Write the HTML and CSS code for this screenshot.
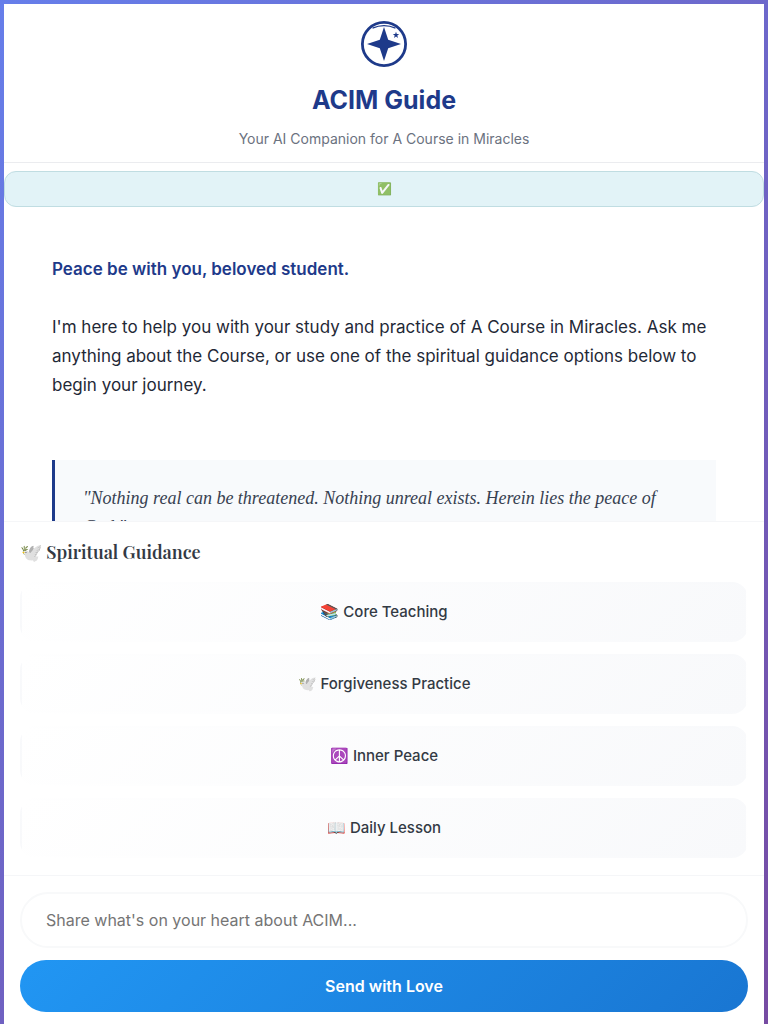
FILE: index.html
```
<!DOCTYPE html>
<html lang="en">
<head>
<meta charset="utf-8">
<meta name="viewport" content="width=device-width, initial-scale=1">
<title>ACIM Guide</title>
<link rel="stylesheet" href="styles.css">
</head>
<body>
<div class="app">
  <header class="header">
    <svg class="logo" viewBox="0 0 48 48" aria-hidden="true">
      <circle cx="24" cy="24" r="21.6" fill="none" stroke="#1e3a8a" stroke-width="2.8"/>
      <path d="M12.500 8.200Q24 3.200 35.500 8.200" fill="none" stroke="#1e3a8a" stroke-width="1.300"/>
      <path d="M24 7L28.200 19.800L41 24L28.200 28.200L24 41L19.800 28.200L7 24L19.800 19.800Z" fill="#1e3a8a"/>
      <path d="M36 11.800l.8 2.200 2.400.1-1.900 1.500.7 2.300-2-1.300-2 1.300.7-2.300-1.900-1.500 2.400-.1z" fill="#1e3a8a"/>
    </svg>
    <h1 class="title">ACIM Guide</h1>
    <p class="subtitle">Your AI Companion for A Course in Miracles</p>
  </header>
  <div class="status" role="status"><span class="status-icon">✅</span></div>
  <main class="messages">
    <p class="greeting">Peace be with you, beloved student.</p>
    <p class="intro">I'm here to help you with your study and practice of A Course in Miracles. Ask me anything about the Course, or use one of the spiritual guidance options below to begin your journey.</p>
    <blockquote class="quote">"Nothing real can be threatened. Nothing unreal exists. Herein lies the peace of God."</blockquote>
  </main>
  <section class="guidance">
    <h2 class="guidance-title">🕊️ Spiritual Guidance</h2>
    <div class="actions">
      <button class="action" type="button">📚 Core Teaching</button>
      <button class="action" type="button">🕊️ Forgiveness Practice</button>
      <button class="action" type="button">☮️ Inner Peace</button>
      <button class="action" type="button">📖 Daily Lesson</button>
    </div>
  </section>
  <form class="composer">
    <input class="message-input" type="text" aria-label="Message" placeholder="Share what's on your heart about ACIM...">
    <button class="send" type="button">Send with Love</button>
  </form>
</div>
</body>
</html>
```
FILE: styles.css
```
* { box-sizing: border-box; margin: 0; }

body {
  height: 100vh;
  padding: 4px 4px 0;
  background: linear-gradient(135deg, #667eea 0%, #764ba2 100%);
  font-family: Inter, "Noto Sans", sans-serif;
  color: #1f2937;
}

.app {
  display: flex;
  flex-direction: column;
  height: 100%;
  overflow: hidden;
  background: #fff;
}

.header {
  display: flex;
  flex-direction: column;
  align-items: center;
  padding: 16px 16px 11px;
  border-bottom: 1px solid #ebecef;
  text-align: center;
}

.logo { width: 48px; height: 48px; }

.title {
  margin-top: 12px;
  font-size: 25px;
  line-height: 40px;
  font-weight: 700;
  color: #1e3a8a;
}

.subtitle {
  margin-top: 7px;
  font-size: 14px;
  line-height: 24px;
  color: #6b7280;
}

.status {
  flex: none;
  margin-top: 8px;
  padding: 8px;
  border: 1px solid #c0dde2;
  border-radius: 12px;
  background: #e2f3f7;
  font-size: 12px;
  line-height: 18px;
  text-align: center;
}

.status-icon { opacity: 0.8; }

.messages {
  flex: 1;
  min-height: 0;
  overflow: hidden;
  padding: 48px 48px 0;
  font-size: 17px;
  line-height: 29px;
}

.greeting { font-weight: 600; color: #1e3a8a; }

.intro { margin-top: 29px; }

.quote {
  margin-top: 60px;
  padding: 24px 28px;
  border-left: 3px solid #1e3a8a;
  background: #f8fafc;
  font-family: "Liberation Serif", serif;
  font-size: 18px;
  font-style: italic;
  color: #374151;
}

.guidance {
  flex: none;
  padding: 16px 16px 17px;
  border-top: 1px solid #f5f6f8;
}

.guidance-title {
  margin-bottom: 16px;
  font-family: "Playfair Display", "Liberation Serif", serif;
  font-size: 18px;
  line-height: 28px;
  font-weight: 600;
  color: #333a44;
}

.actions { display: grid; gap: 12px; }

.action {
  min-height: 60px;
  padding: 16px;
  border: 2px solid transparent;
  border-radius: 16px;
  background: linear-gradient(135deg, #fff 0%, #f8f9fb 100%);
  font: 500 15px/24px Inter, "Noto Sans", sans-serif;
  color: #333a44;
}

.composer {
  flex: none;
  display: grid;
  gap: 12px;
  padding: 16px 16px 12px;
  border-top: 1px solid #f5f6f8;
}

.message-input {
  width: 100%;
  height: 56px;
  padding: 0 24px;
  border: 2px solid #f8f9fa;
  border-radius: 28px;
  background: #fff;
  font: 400 16px/24px Inter, "Noto Sans", sans-serif;
}

.message-input::placeholder { color: #757575; }

.send {
  height: 52px;
  border: 0;
  border-radius: 26px;
  background: linear-gradient(135deg, #2196f3 0%, #1976d2 100%);
  font: 600 16px/24px Inter, "Noto Sans", sans-serif;
  color: #fff;
}
```
